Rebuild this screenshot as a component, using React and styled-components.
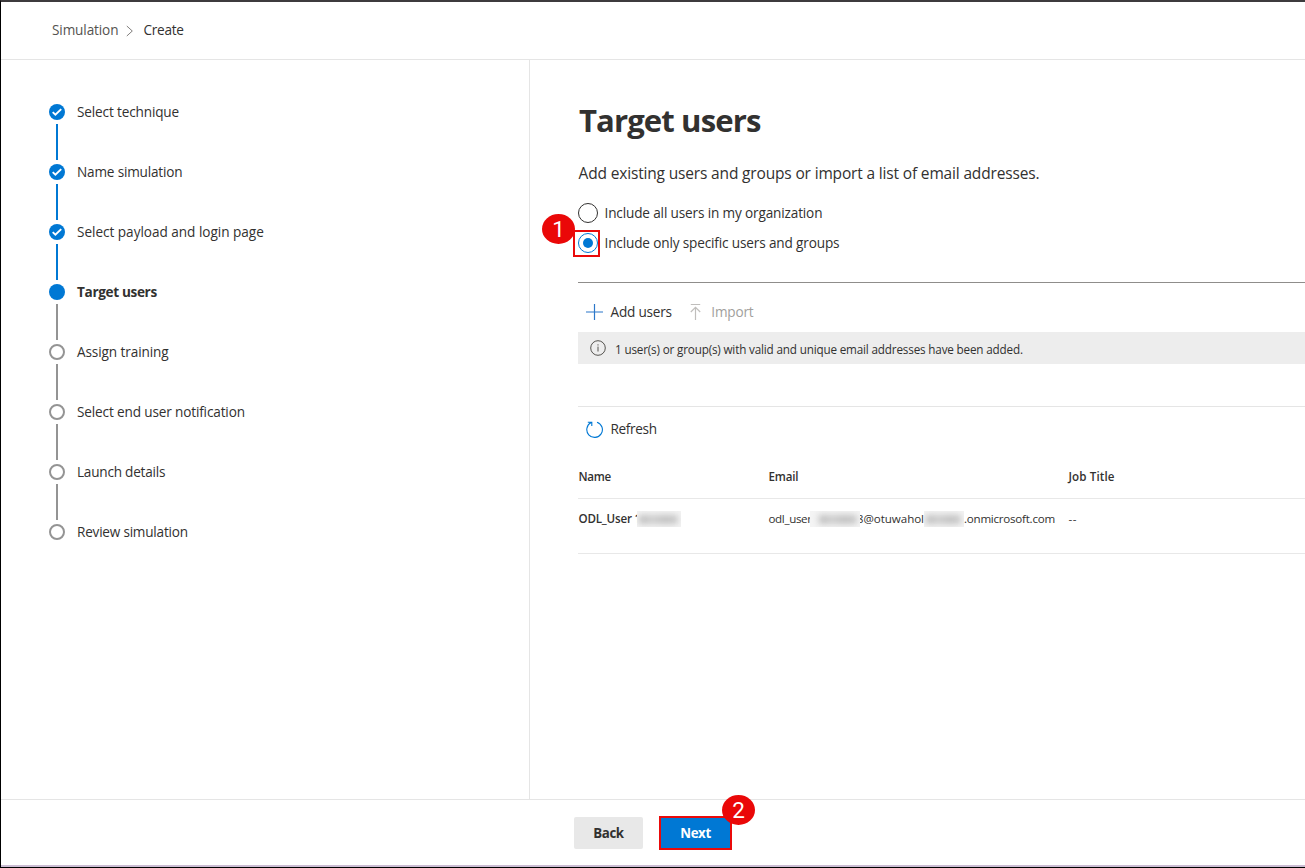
import React from "react";
import styled, { createGlobalStyle, css } from "styled-components";

const Global = createGlobalStyle`
  * { box-sizing: border-box; }
  body { margin: 0; background: #fff; }
`;

const Page = styled.div`
  width: 100%;
  height: 868px;
  display: flex;
  flex-direction: column;
  overflow: hidden;
  border-top: 2px solid #3d3b3d;
  border-left: 1px solid #000;
  border-bottom: 1px solid #000;
  background: #fff;
  color: #323130;
  font-family: "Open Sans", "Noto Sans", sans-serif;
  font-size: 13.6px;
  line-height: 20px;
`;

const Text = styled.span`
  white-space: nowrap;
  letter-spacing: ${(p) => p.$ls || 0}px;
`;

const Breadcrumb = styled.header`
  height: 58px;
  flex: none;
  display: flex;
  align-items: center;
  padding: 0 0 1px 51px;
  border-bottom: 1px solid #e5e5e5;
`;

const Crumb = styled(Text)`
  color: ${(p) => (p.$current ? "#323130" : "#55534f")};
`;

const Chevron = styled.svg`
  width: 8px;
  height: 12px;
  margin: 2px 9px 0 8px;
`;

const Body = styled.div`
  flex: 1;
  min-height: 0;
  display: flex;
`;

const Sidebar = styled.nav`
  width: 529px;
  flex: none;
  padding: 44px 0 0 48px;
  border-right: 1px solid #e5e5e5;
`;

const Step = styled.div`
  height: 60px;
  display: flex;
  gap: 12px;
`;

const StepTrack = styled.div`
  width: 16px;
  display: flex;
  flex-direction: column;
  align-items: center;
  gap: 4px;
`;

const StepDot = styled.div`
  width: 16px;
  height: 16px;
  flex: none;
  display: flex;
  border-radius: 50%;
  ${(p) =>
    p.$state === "todo"
      ? css`border: 2px solid #949494;`
      : css`background: #0078d4;`}
`;

const StepLine = styled.div`
  width: 2px;
  height: 36px;
  background: ${(p) => (p.$done ? "#0078d4" : "#949494")};
`;

const StepLabel = styled(Text)`
  height: 20px;
  margin-top: -2px;
  font-weight: ${(p) => (p.$active ? 700 : 400)};
`;

const Main = styled.main`
  flex: 1;
  min-width: 0;
  padding: 39px 0 0 48px;
`;

const Title = styled.h1`
  margin: 0;
  height: 42px;
  padding-left: 1px;
  font-size: 31.1px;
  line-height: 42px;
  font-weight: 700;
  white-space: nowrap;
  letter-spacing: ${(p) => p.$ls}px;
`;

const Description = styled.p`
  margin: 21px 0 19px;
  height: 22px;
  padding-left: 0.5px;
  font-size: 15.5px;
  line-height: 22px;
  white-space: nowrap;
  letter-spacing: ${(p) => p.$ls}px;
`;

const RadioGroup = styled.div`
  display: flex;
  flex-direction: column;
  gap: 10px;
  margin-bottom: 29px;
`;

const Radio = styled.div`
  height: 20px;
  display: flex;
  align-items: center;
  gap: 6.5px;
`;

const RadioDot = styled.div`
  position: relative;
  width: 20px;
  height: 20px;
  display: grid;
  place-items: center;
  border-radius: 50%;
  border: 1px solid ${(p) => (p.$on ? "#0078d4" : "#323130")};
  &::before {
    content: "";
    width: 10px;
    height: 10px;
    border-radius: 50%;
    background: ${(p) => (p.$on ? "#0078d4" : "transparent")};
  }
`;

const Highlight = styled.div`
  position: absolute;
  left: -6px;
  top: -4px;
  width: 27px;
  height: 27px;
  border: 2px solid #ea0a0a;
`;

const Badge = styled.div`
  position: absolute;
  left: ${(p) => p.$x}px;
  top: ${(p) => p.$y}px;
  width: 33px;
  height: 30px;
  border-radius: 50%;
  background: #ea0808;
  color: #fff;
  text-align: center;
  font: 22.5px/31px Roboto, "Liberation Sans", sans-serif;
  letter-spacing: 0;
`;

const Commands = styled.div`
  height: ${(p) => p.$h}px;
  display: flex;
  align-items: center;
  padding-left: 8px;
  padding-top: ${(p) => p.$pt || 0}px;
  border-top: 1px solid ${(p) => p.$line};
`;

const Command = styled.div`
  display: flex;
  align-items: center;
  gap: 7.5px;
  margin-right: 15px;
  color: ${(p) => (p.$disabled ? "#a19f9d" : "#323130")};
  svg { flex: none; }
`;

const Notice = styled.div`
  height: 32px;
  margin-bottom: 42px;
  padding-left: 12px;
  display: flex;
  align-items: center;
  gap: 9px;
  background: #ededed;
  font-size: 11.7px;
  span { padding-top: 2px; }
`;

const TableRow = styled.div`
  display: grid;
  grid-template-columns: 190px 300px 1fr;
  height: ${(p) => p.$h}px;
  padding-top: ${(p) => p.$pt}px;
  border-bottom: 1px solid #e8e8e8;
  font-size: 11.6px;
  line-height: 16px;
  font-weight: ${(p) => (p.$head ? 600 : 400)};
`;

const Cell = styled.div`
  display: flex;
  height: 16px;
  padding-left: 0.5px;
  font-weight: ${(p) => (p.$strong ? 600 : "inherit")};
`;

const Part = styled(Text)`
  width: ${(p) => p.$w}px;
  height: 16px;
  flex: none;
  display: flex;
  justify-content: ${(p) => (p.$end ? "flex-end" : "flex-start")};
`;

const Redacted = styled.div`
  position: relative;
  width: ${(p) => p.$w}px;
  height: 16px;
  flex: none;
  overflow: hidden;
  background: #f4f4f4;
  &::before {
    content: "";
    display: block;
    height: 9px;
    margin: 4px 3px 0 ${(p) => p.$inset || 2}px;
    background: linear-gradient(90deg, #bcbcbc, #cdcdcd 35%, #c0c0c0 65%, #c8c8c8);
    filter: blur(3px);
  }
`;

const Footer = styled.footer`
  height: 68px;
  flex: none;
  display: flex;
  align-items: flex-start;
  gap: 16px;
  padding: 16px 0 0 573px;
  border-top: 1px solid #e5e5e5;
  border-bottom: 2px solid #cbbdd3;
`;

const Button = styled.button`
  position: relative;
  width: ${(p) => (p.$primary ? 73 : 69)}px;
  height: ${(p) => (p.$primary ? 34 : 32)}px;
  margin-top: ${(p) => (p.$primary ? 0 : 1)}px;
  padding: 0;
  border: ${(p) => (p.$primary ? "2px solid #ea0a0a" : "0")};
  border-radius: ${(p) => (p.$primary ? 0 : 2)}px;
  background: ${(p) => (p.$primary ? "#0078d4" : "#e8e8e8")};
  color: ${(p) => (p.$primary ? "#fff" : "#323130")};
  font: 700 13.3px/20px "Open Sans", "Noto Sans", sans-serif;
  letter-spacing: -0.4px;
`;

const steps = [
  ["Select technique", "done", -0.15],
  ["Name simulation", "done", -0.18],
  ["Select payload and login page", "done", -0.03],
  ["Target users", "active", -0.35],
  ["Assign training", "todo", -0.1],
  ["Select end user notification", "todo", -0.15],
  ["Launch details", "todo", -0.23],
  ["Review simulation", "todo", -0.22],
];

const Check = () => (
  <svg width="16" height="16" viewBox="0 0 16 16" fill="none" stroke="#fff" strokeWidth="1.9">
    <path d="M3.7 8.1 6.4 10.7 12.2 5.1" />
  </svg>
);

export default function App() {
  return (
    <Page>
      <Global />
      <Breadcrumb>
        <Crumb $ls={-0.12}>Simulation</Crumb>
        <Chevron viewBox="0 0 8 12" fill="none" stroke="#807e7c">
          <path d="M.8 1 6.3 6 .8 11" />
        </Chevron>
        <Crumb $current $ls={-0.25}>Create</Crumb>
      </Breadcrumb>
      <Body>
        <Sidebar>
          {steps.map(([label, state, ls], i) => (
            <Step key={label}>
              <StepTrack>
                <StepDot $state={state}>{state === "done" && <Check />}</StepDot>
                {i < steps.length - 1 && <StepLine $done={state === "done"} />}
              </StepTrack>
              <StepLabel $active={state === "active"} $ls={ls}>{label}</StepLabel>
            </Step>
          ))}
        </Sidebar>
        <Main>
          <Title $ls={-0.9}>Target users</Title>
          <Description $ls={-0.16}>
            Add existing users and groups or import a list of email addresses.
          </Description>
          <RadioGroup>
            <Radio>
              <RadioDot />
              <Text $ls={-0.15}>Include all users in my organization</Text>
            </Radio>
            <Radio>
              <RadioDot $on>
                <Highlight />
                <Badge $x={-37} $y={-20}>1</Badge>
              </RadioDot>
              <Text $ls={-0.15}>Include only specific users and groups</Text>
            </Radio>
          </RadioGroup>
          <Commands $h={50} $pt={9} $line="#8f8d8b">
            <Command>
              <svg width="17" height="16" viewBox="0 0 17 16" stroke="#2b77c9" strokeWidth="1.2">
                <path d="M8.5 0V16M0 8H17" />
              </svg>
              <Text $ls={-0.22}>Add users</Text>
            </Command>
            <Command $disabled>
              <svg width="17" height="16" viewBox="0 0 17 16" fill="none" stroke="#c0bebc" strokeWidth="1.2">
                <path d="M3.8 .5H13.2M8.5 16V3.5M3.8 8 8.5 3.3 13.2 8" />
              </svg>
              <Text $ls={-0.18}>Import</Text>
            </Command>
          </Commands>
          <Notice>
            <svg width="16" height="16" viewBox="0 0 16 16" fill="none" stroke="#55534f">
              <circle cx="8" cy="8" r="7.3" />
              <path d="M8 6.6V11.5M8 4.3V5.5" />
            </svg>
            <Text $ls={-0.165}>1 user(s) or group(s) with valid and unique email addresses have been added.</Text>
          </Notice>
          <Commands $h={45} $line="#e5e5e5">
            <Command>
              <svg width="17" height="17" viewBox="0 0 17 17" fill="none" stroke="#0078d4" strokeWidth="1.1">
                <path d="M11 1.2A7.8 7.8 0 1 1 5.2 1.6M1.8 1.2H5.8V5" />
              </svg>
              <Text $ls={-0.35}>Refresh</Text>
            </Command>
          </Commands>
          <TableRow $head $h={48} $pt={18}>
            <Cell><Text $ls={-0.25}>Name</Text></Cell>
            <Cell><Text $ls={-0.2}>Email</Text></Cell>
            <Cell><Text $ls={0.12}>Job Title</Text></Cell>
          </TableRow>
          <TableRow $h={55} $pt={12}>
            <Cell $strong>
              <Part $w={58.5} $ls={-0.2}>ODL_User 1</Part>
              <Redacted $w={44} />
            </Cell>
            <Cell>
              <Part $w={41.5} $ls={-0.35}>odl_user</Part>
              <Redacted $w={50} $inset={9} />
              <Part $w={64} $end $ls={-0.05}>8@otuwahol</Part>
              <Redacted $w={40} />
              <Part $w={92} $ls={-0.25}>.onmicrosoft.com</Part>
            </Cell>
            <Cell><Text $ls={0.5}>--</Text></Cell>
          </TableRow>
        </Main>
      </Body>
      <Footer>
        <Button>Back</Button>
        <Button $primary>
          Next
          <Badge $x={61} $y={-23}>2</Badge>
        </Button>
      </Footer>
    </Page>
  );
}
